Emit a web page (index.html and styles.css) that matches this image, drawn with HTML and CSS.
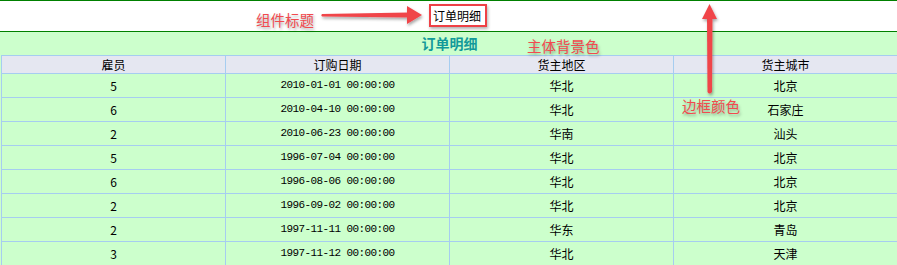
FILE: index.html
```html
<!DOCTYPE html>
<html lang="zh">
<head>
<meta charset="utf-8">
<title>订单明细</title>
<link rel="stylesheet" href="styles.css">
</head>
<body>
<div class="page">
  <div class="topbar"><span class="comp-title">订单明细</span></div>
  <div class="main">
    <div class="main-title">订单明细</div>
    <table class="grid">
      <thead>
        <tr><th>雇员</th><th>订购日期</th><th>货主地区</th><th>货主城市</th></tr>
      </thead>
      <tbody>
        <tr><td>5</td><td class="num">2010-01-01 00:00:00</td><td>华北</td><td>北京</td></tr>
        <tr><td>6</td><td class="num">2010-04-10 00:00:00</td><td>华北</td><td>石家庄</td></tr>
        <tr><td>2</td><td class="num">2010-06-23 00:00:00</td><td>华南</td><td>汕头</td></tr>
        <tr><td>5</td><td class="num">1996-07-04 00:00:00</td><td>华北</td><td>北京</td></tr>
        <tr><td>6</td><td class="num">1996-08-06 00:00:00</td><td>华北</td><td>北京</td></tr>
        <tr><td>2</td><td class="num">1996-09-02 00:00:00</td><td>华北</td><td>北京</td></tr>
        <tr><td>2</td><td class="num">1997-11-11 00:00:00</td><td>华东</td><td>青岛</td></tr>
        <tr><td>3</td><td class="num">1997-11-12 00:00:00</td><td>华北</td><td>天津</td></tr>
      </tbody>
    </table>
  </div>

  <svg class="arrows" width="897" height="265" viewBox="0 0 897 265">
    <defs>
      <filter id="sh" x="-20%" y="-20%" width="140%" height="140%">
        <feDropShadow dx="1" dy="2" stdDeviation="1.6" flood-color="#000" flood-opacity="0.35"/>
      </filter>
    </defs>
    <g fill="#f0444a" filter="url(#sh)">
      <path d="M322 14 L409 12.5 L409 17.5 L322 16.5 Q320.5 15.2 322 14 Z"/>
      <path d="M407 6 L422 15 L407 24 Z"/>
      <path d="M709.5 4 L717 19 L702 19 Z"/>
      <path d="M707 18 L712.5 18 L712 92 Q709.5 95 707.5 92 Z"/>
    </g>
  </svg>
  <span class="note note-title">组件标题</span>
  <span class="note note-bg">主体背景色</span>
  <span class="note note-border">边框颜色</span>
  <span class="hilite"></span>
</div>
</body>
</html>
```
FILE: styles.css
```css
html, body {
  margin: 0;
  padding: 0;
  background: #ccffcc;
}
body {
  font-family: "Noto Sans CJK SC", "DejaVu Sans", sans-serif;
  font-size: 12px;
  color: #000;
  width: 897px;
  height: 265px;
  overflow: hidden;
}
.page {
  position: relative;
  width: 897px;
  height: 265px;
  overflow: hidden;
}
.topbar {
  box-sizing: border-box;
  height: 32px;
  background: #fff;
  border-top: 1px solid #008000;
  border-bottom: 1px solid #008000;
  display: flex;
  align-items: center;
  justify-content: center;
  padding-left: 17px;
  padding-bottom: 1px;
}
.comp-title {
  font-size: 12px;
  line-height: 14px;
}
.main {
  background: #ccffcc;
}
.main-title {
  height: 23px;
  line-height: 23px;
  text-align: center;
  font-size: 14px;
  font-weight: bold;
  color: #139a9a;
  padding-left: 2px;
}
.grid {
  border-collapse: collapse;
  margin-left: 1px;
  width: 897px;
  table-layout: fixed;
}
.grid th, .grid td {
  border: 1px solid #a6cdf0;
  text-align: center;
  padding: 0;
  font-size: 12px;
}
.grid th {
  background: #e5e7f1;
  font-weight: normal;
  height: 17px;
  line-height: 17px;
}
.grid td {
  height: 23px;
  line-height: 23px;
}
.grid td.num {
  font-family: "Liberation Mono", "Noto Sans CJK SC", monospace;
  font-size: 11px;
  letter-spacing: -0.6px;
}
.arrows {
  position: absolute;
  left: 0;
  top: 0;
  pointer-events: none;
}
.note {
  position: absolute;
  color: #f24a4f;
  font-size: 15px;
  line-height: 16px;
  white-space: nowrap;
  text-shadow: 1px 2px 3px rgba(0, 0, 0, 0.35);
}
.note-title { left: 256px; top: 12px; font-size: 14.5px; }
.note-bg { left: 527px; top: 38px; font-size: 14.5px; }
.note-border { left: 682px; top: 98px; font-size: 14.5px; }
.hilite {
  position: absolute;
  left: 429px;
  top: 4px;
  width: 54px;
  height: 19px;
  border: 2px solid #ee4046;
  box-shadow: 1px 2px 3px rgba(0, 0, 0, 0.3);
}
```
